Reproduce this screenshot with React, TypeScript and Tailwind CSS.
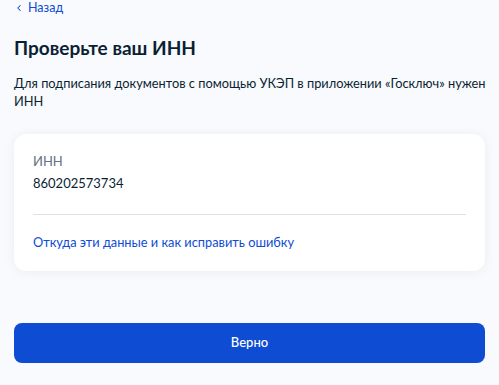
import { ChevronLeft } from 'lucide-react'

export default function App() {
  return (
    <div
      className="w-[499px] h-[385px] bg-[#f8fafd] px-[14px] flex flex-col overflow-hidden"
      style={{ fontFamily: 'Lato, "Noto Sans", sans-serif' }}
    >
      {/* Back link */}
      <button className="flex items-center gap-[4px] h-[16px] text-[12.5px] leading-[16px] text-[#0d4cd3]">
        <ChevronLeft size={10} strokeWidth={2.5} />
        <span>Назад</span>
      </button>

      <h1 className="mt-[20px] text-[19px] leading-[24px] font-bold text-[#0b1f33]">Проверьте ваш ИНН</h1>

      <p className="mt-[14px] -mr-[8px] text-[12.8px] leading-[18px] text-[#0b1f33]">
        Для подписания документов с помощью УКЭП в приложении «Госключ» нужен ИНН
      </p>

      {/* Card */}
      <div className="mt-[24px] bg-white rounded-[12px] shadow-[0_1px_12px_rgba(11,31,51,0.06)] px-[19px] pt-[17px] pb-[19px]">
        <div className="text-[13px] leading-[20px] text-[#66727f]">ИНН</div>
        <div className="mt-[2px] text-[13px] leading-[20px] text-[#0b1f33]">860202573734</div>
        <div className="mt-[21px] h-px bg-[#e1e1e1]" />
        <a className="block mt-[17px] text-[12.8px] leading-[20px] text-[#0d4cd3]">
          Откуда эти данные и как исправить ошибку
        </a>
      </div>

      <button className="mt-[52px] h-[40px] w-full rounded-[8px] bg-[#0d4cd3] text-white text-[13px] font-medium">
        Верно
      </button>
    </div>
  )
}
